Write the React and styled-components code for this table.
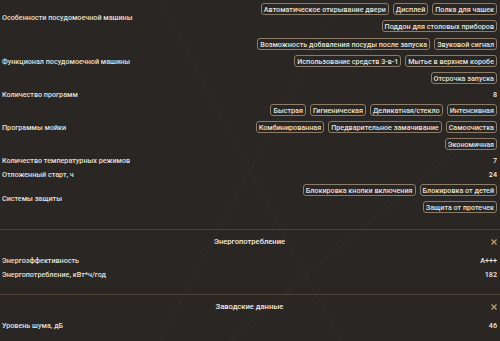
import styled, { createGlobalStyle } from "styled-components";

const GlobalStyle = createGlobalStyle`
  html, body {
    margin: 0;
    background-color: #2a2624;
  }
  body {
    font-family: Roboto, "Noto Sans", sans-serif;
    color: #e6e2dd;
  }
`;

const Page = styled.div`
  width: 500px;
  height: 341px;
  box-sizing: border-box;
  padding: 0 3px 0 2px;
  overflow: hidden;
  font-size: 7.2px;
  background-color: #2a2624;
  background-image:
    linear-gradient(118deg, transparent 49.85%, rgba(255, 255, 255, 0.03) 50%, transparent 50.15%),
    linear-gradient(62deg, transparent 49.8%, rgba(255, 255, 255, 0.025) 50%, transparent 50.2%),
    linear-gradient(140deg, transparent 69.8%, rgba(255, 255, 255, 0.025) 70%, transparent 70.2%);
`;

const Section = styled.section`
  padding-bottom: 13px;
  border-top: ${(p) => (p.$first ? "none" : "1px solid #4e4237")};
  margin: 0 -3px 0 -2px;
  padding-left: 2px;
  padding-right: 3px;
`;

const Header = styled.div`
  display: grid;
  grid-template-columns: 1fr auto 1fr;
  align-items: center;
  height: 23px;
`;

const Title = styled.div`
  grid-column: 2;
  font-size: 7.6px;
  font-weight: 500;
  color: #efebe6;
`;

const Close = styled.svg`
  grid-column: 3;
  justify-self: end;
  width: 6px;
  height: 6px;
`;

const Row = styled.div`
  display: grid;
  grid-template-columns: 1fr 1fr;
  align-items: center;
  min-height: 14px;
`;

const Label = styled.div`
  font-weight: 500;
  white-space: nowrap;
  color: #e4e0db;
`;

const Value = styled.div`
  font-weight: 500;
  text-align: right;
  color: #f0ece7;
`;

const TagList = styled.div`
  display: flex;
  flex-wrap: wrap;
  justify-content: flex-end;
  gap: 5px 4px;
  padding: 3px 0;
`;

const Tag = styled.span`
  box-sizing: border-box;
  height: 12px;
  padding: 0 2px;
  display: inline-flex;
  align-items: center;
  border: 1px solid #8c7b66;
  border-radius: 3px;
  font-weight: 500;
  white-space: nowrap;
  color: #e6e2dc;
`;

const specs = [
  [
    "Особенности посудомоечной машины",
    ["Автоматическое открывание двери", "Дисплей", "Полка для чашек", "Поддон для столовых приборов"],
  ],
  [
    "Функционал посудомоечной машины",
    [
      "Возможность добавления посуды после запуска",
      "Звуковой сигнал",
      "Использование средств 3-в-1",
      "Мытье в верхнем коробе",
      "Отсрочка запуска",
    ],
  ],
  ["Количество программ", "8"],
  [
    "Программы мойки",
    [
      "Быстрая",
      "Гигиеническая",
      "Деликатная/стекло",
      "Интенсивная",
      "Комбинированная",
      "Предварительное замачивание",
      "Самоочистка",
      "Экономичная",
    ],
  ],
  ["Количество температурных режимов", "7"],
  ["Отложенный старт, ч", "24"],
  ["Системы защиты", ["Блокировка кнопки включения", "Блокировка от детей", "Защита от протечек"]],
];

const energy = [
  ["Энергоэффективность", "A+++"],
  ["Энергопотребление, кВт*ч/год", "182"],
];

const factory = [["Уровень шума, дБ", "46"]];

const SpecRow = ({ label, value }) => (
  <Row>
    <Label>{label}</Label>
    {Array.isArray(value) ? (
      <TagList>
        {value.map((t) => (
          <Tag key={t}>{t}</Tag>
        ))}
      </TagList>
    ) : (
      <Value>{value}</Value>
    )}
  </Row>
);

const CloseIcon = () => (
  <Close viewBox="0 0 6 6">
    <path d="M0.5 0.5 L5.5 5.5 M5.5 0.5 L0.5 5.5" stroke="#c8a26c" strokeWidth="1.1" />
  </Close>
);

const Group = ({ title, rows }) => (
  <Section>
    <Header>
      <Title>{title}</Title>
      <CloseIcon />
    </Header>
    {rows.map(([l, v]) => (
      <SpecRow key={l} label={l} value={v} />
    ))}
  </Section>
);

const App = () => {
  return (
    <Page>
      <GlobalStyle />
      <Section $first>
        {specs.map(([l, v]) => (
          <SpecRow key={l} label={l} value={v} />
        ))}
      </Section>
      <Group title="Энергопотребление" rows={energy} />
      <Group title="Заводские данные" rows={factory} />
    </Page>
  );
};

export default App;
